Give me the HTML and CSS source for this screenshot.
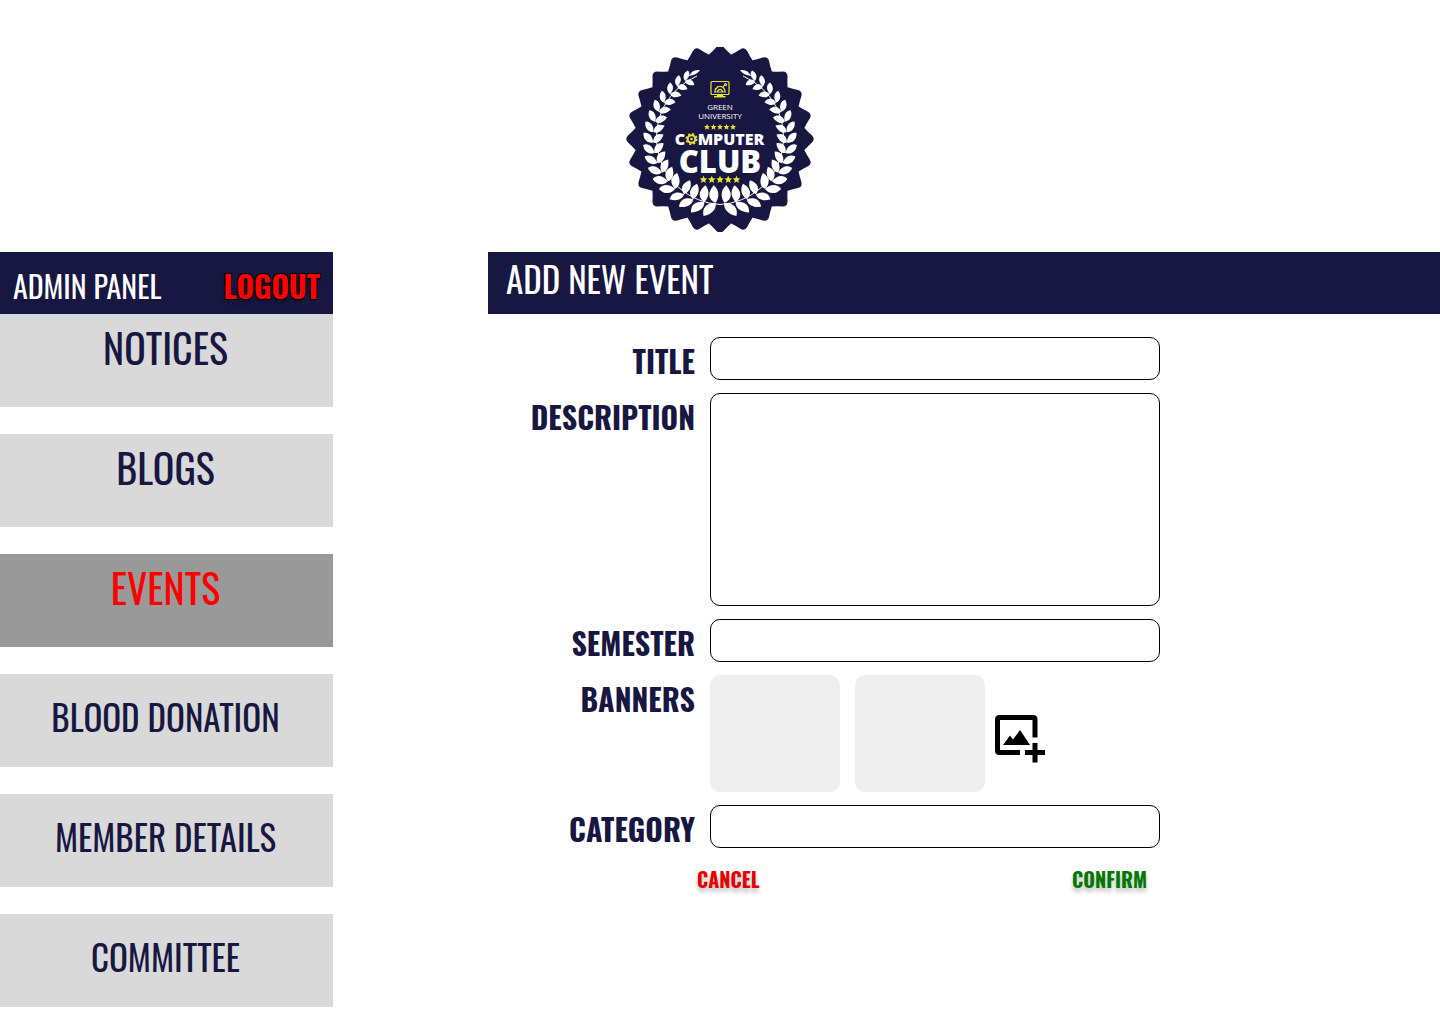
FILE: index.html
```html
<!DOCTYPE html>
<html lang="en">
<head>
<meta charset="utf-8">
<meta name="viewport" content="width=device-width, initial-scale=1">
<title>Add New Event</title>
<link rel="stylesheet" href="styles.css">
</head>
<body>
<header class="masthead">
  <svg class="badge" viewBox="-94 -92 188 185" role="img" aria-label="Green University Computer Club">
    <defs>
      <path id="lobe" d="M-13-80L-11-84.500Q-7-88-3.500-92Q0-95.500 3.500-92Q7-88 11-84.500L13-80Z"/>
      <g id="lobes6">
        <use href="#lobe"/><use href="#lobe" transform="rotate(15)"/><use href="#lobe" transform="rotate(30)"/>
        <use href="#lobe" transform="rotate(45)"/><use href="#lobe" transform="rotate(60)"/><use href="#lobe" transform="rotate(75)"/>
      </g>
      <g id="leaves">
        <path d="M0 0C-8-3-9-10-3-17.500C4-12 3-5 0 0Z"/>
        <path d="M0 0C-7 0-14 5-11 14C-3 12 2 6 0 0Z"/>
      </g>
      <g id="slim">
        <path d="M0 0C-7 0-12-5-9-13C-1-10 2-5 0 0Z"/>
        <path d="M0 0C-7 0-13 4-12 11C-4 12 1 6 0 0Z"/>
      </g>
      <g id="branch">
        <path d="M0 65.500A67 67 0 0 1-23-63" fill="none" stroke="#fff" stroke-width="1"/>
        <use href="#leaves" transform="rotate(4) translate(0 64)"/>
        <use href="#leaves" transform="rotate(14) translate(0 65) scale(.95)"/>
        <use href="#leaves" transform="rotate(24) translate(0 66) scale(.9)"/>
        <use href="#leaves" transform="rotate(33) translate(0 66) scale(.86)"/>
        <use href="#slim" transform="rotate(42) translate(0 67)"/>
        <use href="#slim" transform="rotate(51) translate(0 67) scale(.95)"/>
        <use href="#slim" transform="rotate(60) translate(0 67) scale(.91)"/>
        <use href="#slim" transform="rotate(69) translate(0 67) scale(.88)"/>
        <use href="#slim" transform="rotate(78) translate(0 67) scale(.85)"/>
        <use href="#slim" transform="rotate(87) translate(0 67) scale(.83)"/>
        <use href="#slim" transform="rotate(96) translate(0 67) scale(.81)"/>
        <use href="#slim" transform="rotate(105) translate(0 67) scale(.79)"/>
        <use href="#slim" transform="rotate(114) translate(0 67) scale(.77)"/>
        <use href="#slim" transform="rotate(123) translate(0 67) scale(.74)"/>
        <use href="#slim" transform="rotate(132) translate(0 67) scale(.71)"/>
        <use href="#slim" transform="rotate(141) translate(0 68) scale(.68)"/>
        <use href="#slim" transform="rotate(149) translate(0 68) scale(.65)"/>
        <path d="M-31-63Q-28-70-20-69Q-23-64-31-63Z"/>
      </g>
      <path id="star" d="M0-3L.9-.9L3-.8L1.400.6L1.900 2.700L0 1.500L-1.900 2.700L-1.400.6L-3-.8L-.9-.9Z"/>
      <g id="stars">
        <use href="#star" x="-13"/><use href="#star" x="-6.500"/><use href="#star"/><use href="#star" x="6.500"/><use href="#star" x="13"/>
      </g>
    </defs>
    <g fill="#171742">
      <circle r="84"/>
      <use href="#lobes6"/><use href="#lobes6" transform="rotate(90)"/>
      <use href="#lobes6" transform="rotate(180)"/><use href="#lobes6" transform="rotate(270)"/>
    </g>
    <g fill="#fff">
      <use href="#branch"/>
      <use href="#branch" transform="scale(-1 1)"/>
    </g>
    <g fill="none" stroke="#e9e337" stroke-width="1.200">
      <rect x="-9" y="-57.500" width="18" height="13" rx="1"/>
      <path d="M-6-42.200H5.500M-3-43.200H3" stroke-width="1.500"/>
      <path d="M-6-47H6M-5-47.500A5 5 0 0 1 5-47.500M-2.200-47.500A2.200 2.200 0 0 1 2.200-47.500M3-52L4.500-53.500"/>
      <path d="M-5-50.500L-4-49.500M-2.500-53L-2-52M1.500-53L1-52" stroke-width="1.500"/>
      <circle cx="5.500" cy="-54.500" r="1"/>
    </g>
    <g class="badge-text" fill="#fff" text-anchor="middle">
      <text class="badge-small" x="0" y="-29">GREEN</text>
      <text class="badge-small" x="0" y="-20">UNIVERSITY</text>
      <text class="badge-mid" x="-40" y="6">C</text>
      <text class="badge-mid" x="11" y="6">MPUTER</text>
      <text class="badge-large" x="0" y="34">CLUB</text>
    </g>
    <g fill="#e9e337">
      <use href="#stars" y="-12"/>
      <use href="#stars" transform="translate(0 40.500) scale(1.270)"/>
    </g>
    <g transform="translate(-28.500 0)" fill="none" stroke="#e9e337">
      <circle r="3.800" stroke-width="2"/>
      <circle r="5.300" stroke-width="1.500" stroke-dasharray="2.160 2"/>
      <circle r="1.300" fill="#e9e337" stroke="none"/>
    </g>
  </svg>
</header>
<div class="layout">
  <aside class="sidebar">
    <div class="bar panel-head">
      <span class="panel-title">ADMIN PANEL</span>
      <button class="logout" type="button">LOGOUT</button>
    </div>
    <nav class="menu">
      <a class="item raised" href="#notices">NOTICES</a>
      <a class="item raised" href="#blogs">BLOGS</a>
      <a class="item raised active" href="#events" aria-current="page">EVENTS</a>
      <a class="item" href="#blood">BLOOD DONATION</a>
      <a class="item" href="#members">MEMBER DETAILS</a>
      <a class="item" href="#committee">COMMITTEE</a>
    </nav>
  </aside>
  <main class="content">
    <h1 class="bar page-title">ADD NEW EVENT</h1>
    <form class="event-form">
      <label class="label" for="title">TITLE</label>
      <input class="field" id="title" type="text">
      <label class="label" for="description">DESCRIPTION</label>
      <textarea class="field area" id="description"></textarea>
      <label class="label" for="semester">SEMESTER</label>
      <input class="field" id="semester" type="text">
      <span class="label">BANNERS</span>
      <div class="banners">
        <div class="thumb"></div>
        <div class="thumb"></div>
        <button class="add" type="button" aria-label="Add banner">
          <svg width="50" height="48" viewBox="0 0 50 48">
            <path d="M40 22.500V4.500Q40 2.500 38 2.500H4.500Q2.500 2.500 2.500 4.500V35.500Q2.500 37.500 4.500 37.500H25" fill="none" stroke="#000" stroke-width="5"/>
            <path d="M40 28V47.500M30 37.500H50" stroke="#000" stroke-width="5"/>
            <path d="M8 30L15 20.500L18 24.500L25 15L35 30Z"/>
          </svg>
        </button>
      </div>
      <label class="label" for="category">CATEGORY</label>
      <input class="field" id="category" type="text">
      <div class="actions">
        <button class="action cancel" type="reset">CANCEL</button>
        <button class="action confirm" type="submit">CONFIRM</button>
      </div>
    </form>
  </main>
</div>
</body>
</html>
```
FILE: styles.css
```css
* { box-sizing: border-box; }
body {
  margin: 0;
  background: #fff;
  color: #171742;
  font-family: Oswald, "Liberation Sans Narrow", "Noto Sans", sans-serif;
}
button {
  padding: 0;
  border: 0;
  background: none;
  font-family: inherit;
  cursor: pointer;
}
.masthead {
  display: flex;
  justify-content: center;
  padding: 47px 0 20px;
}
.badge { width: 188px; height: 185px; }
.badge-text { font-family: "Open Sans", "Noto Sans", sans-serif; }
.badge-small { font-size: 8px; }
.badge-mid { font-size: 16px; font-weight: 800; }
.badge-large { font-size: 31px; font-weight: 800; }

.layout { display: flex; gap: 155px; }
.sidebar { flex: 0 0 333px; }
.bar {
  display: flex;
  align-items: center;
  min-height: 62px;
  margin: 0;
  background: #171742;
  color: #fff;
}
.panel-head {
  justify-content: space-between;
  padding: 4px 13px 0;
}
.panel-title { font-size: 30px; }
.logout {
  color: #f00;
  font-size: 30px;
  font-weight: 700;
  -webkit-text-stroke: 2px #000;
  paint-order: stroke fill;
  text-shadow: 0 4px 4px rgba(0, 0, 0, .25);
}
.menu {
  display: flex;
  flex-direction: column;
  gap: 27px;
}
.item {
  display: flex;
  align-items: center;
  justify-content: center;
  min-height: 93px;
  padding: 0 2px 9px 0;
  background: #d9d9d9;
  color: #171742;
  font-size: 35px;
  text-decoration: none;
}
.raised {
  padding-bottom: 27px;
  font-size: 40px;
}
.active { background: #999; color: #f00; }

.content { flex: 1; min-width: 0; }
.page-title {
  padding: 0 18px 10px;
  font-size: 35px;
  font-weight: 400;
  line-height: 48px;
}
.event-form {
  display: grid;
  grid-template-columns: 207px minmax(0, 450px);
  column-gap: 15px;
  row-gap: 13px;
  align-items: start;
  padding-top: 23px;
}
.label {
  padding-top: 6px;
  font-size: 30px;
  font-weight: 700;
  line-height: 36px;
  text-align: right;
}
.field {
  width: 100%;
  height: 43px;
  padding: 4px 12px;
  border: 1px solid #000;
  border-radius: 10px;
  background: #fff;
  font: inherit;
  font-size: 20px;
}
.area { display: block; height: 213px; resize: none; }
.banners { display: flex; align-items: center; gap: 15px; }
.thumb {
  width: 130px;
  height: 117px;
  border-radius: 10px;
  background: #eee;
}
.add { margin: 10px 0 0 -5px; }
.add svg { display: block; }
.actions {
  grid-column: 1 / -1;
  display: flex;
  justify-content: space-between;
  padding: 3px 13px 0 209px;
}
.action {
  font-size: 20px;
  font-weight: 700;
  line-height: 30px;
  text-shadow: 0 4px 4px rgba(0, 0, 0, .25);
}
.cancel { color: #e60000; }
.confirm { color: #070; }
```
